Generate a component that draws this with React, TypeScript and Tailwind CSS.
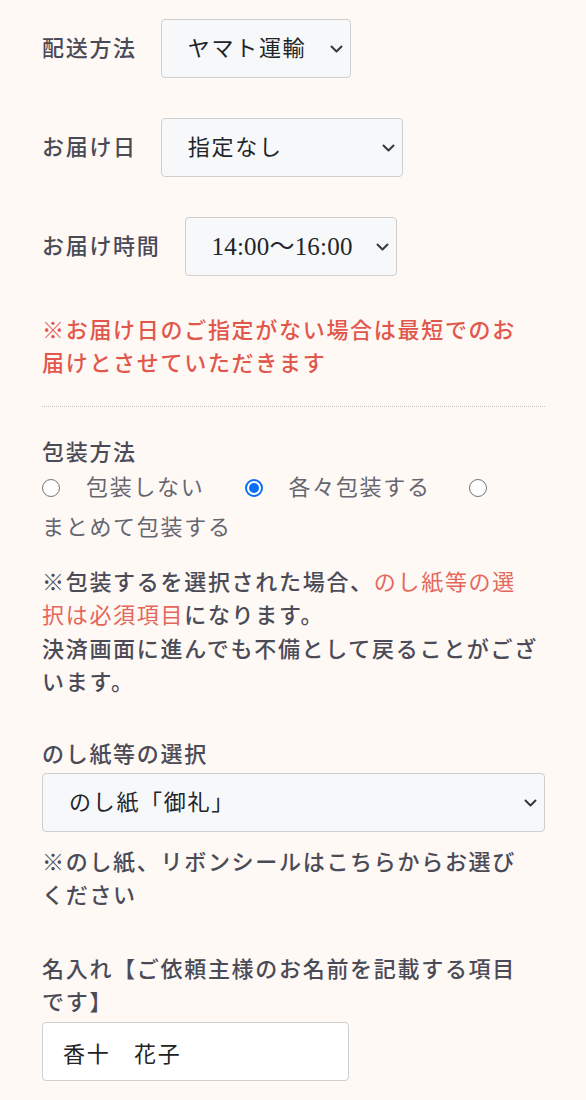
import React from "react";

const FONT = {
  fontFamily: '"Liberation Serif", "Noto Sans CJK JP", serif',
};

function Chevron() {
  return (
    <svg
      className="pointer-events-none absolute right-[8px] top-1/2 -translate-y-1/2"
      width="13"
      height="8"
      viewBox="0 0 13 8"
      fill="none"
    >
      <path d="M1.5 1.5 L6.5 6.5 L11.5 1.5" stroke="#343a40" strokeWidth="2" strokeLinecap="round" strokeLinejoin="round" />
    </svg>
  );
}

function Select({ value, widthClass, textClass }: { value: string; widthClass: string; textClass?: string }) {
  return (
    <div className={`relative ${widthClass}`}>
      <select
        defaultValue={value}
        className={`h-[59px] w-full appearance-none rounded-[4px] border border-[#cfcfcf] bg-[#f7f8fa] pl-[26px] pr-[30px] text-[#212529] outline-none ${
          textClass ?? "text-[22px] tracking-[1.7px]"
        }`}
        style={FONT}
      >
        <option value={value}>{value}</option>
      </select>
      <Chevron />
    </div>
  );
}

function Radio({ checked }: { checked?: boolean }) {
  if (checked) {
    return (
      <span className="mr-[26px] flex h-[18px] w-[18px] shrink-0 items-center justify-center rounded-full border-[2px] border-[#0b6ff5] bg-white">
        <span className="h-[10px] w-[10px] rounded-full bg-[#0b6ff5]" />
      </span>
    );
  }
  return (
    <span className="mr-[26px] h-[18px] w-[18px] shrink-0 rounded-full border-[1.5px] border-[#767676] bg-white" />
  );
}

export default function App() {
  return (
    <div
      className="min-h-[1100px] w-full bg-[#fef9f5] pl-[42px] pr-[41px] pt-[19px] text-[22px] leading-[33px] tracking-[1.7px] text-[#4b4b57]"
      style={FONT}
    >
      <div className="flex items-center gap-[24px]">
        <span className="font-medium">配送方法</span>
        <Select value="ヤマト運輸" widthClass="w-[190px]" />
      </div>
      <div className="mt-[40px] flex items-center gap-[24px]">
        <span className="font-medium">お届け日</span>
        <Select value="指定なし" widthClass="w-[242px]" />
      </div>
      <div className="mt-[40px] flex items-center gap-[24px]">
        <span className="font-medium">お届け時間</span>
        <Select value="14:00～16:00" widthClass="w-[212px]" textClass="text-[25px] tracking-[0.2px]" />
      </div>

      <p className="mt-[38px] font-medium text-[#e2574c]">
        ※お届け日のご指定がない場合は最短でのお
        <br />
        届けとさせていただきます
      </p>

      <div className="mt-[26px] border-t border-dotted border-[#c9c6c2]" />

      <div className="mt-[29px] font-medium">包装方法</div>
      <div className="mt-[2px] flex flex-wrap items-center gap-y-[7px] text-[#666670]">
        <Radio />
        <span className="mr-[40px] h-[33px] whitespace-nowrap">包装しない</span>
        <Radio checked />
        <span className="mr-[38px] h-[33px] whitespace-nowrap">各々包装する</span>
        <Radio />
        <span className="h-[33px] whitespace-nowrap">まとめて包装する</span>
      </div>

      <p className="mt-[22px] font-medium leading-[33.3px]">
        ※包装するを選択された場合、
        <span className="font-normal text-[#e5675b]">
          のし紙等の選
          <br />
          択は必須項目
        </span>
        になります。
        <br />
        決済画面に進んでも不備として戻ることがござ
        <br />
        います。
      </p>

      <div className="mt-[39px] font-medium">のし紙等の選択</div>
      <div className="mt-[2px]">
        <Select value="のし紙「御礼」" widthClass="w-full" />
      </div>
      <p className="mt-[14px] font-medium">
        ※のし紙、リボンシールはこちらからお選び
        <br />
        ください
      </p>

      <div className="mt-[41px] font-medium">
        名入れ【ご依頼主様のお名前を記載する項目
        <br />
        です】
      </div>
      <input
        type="text"
        defaultValue="香十　花子"
        className="mt-[3px] h-[59px] w-[307px] rounded-[4px] border border-[#cfcfcf] bg-white pl-[20px] text-[22px] tracking-[1.7px] text-[#222] outline-none"
        style={FONT}
      />
    </div>
  );
}
